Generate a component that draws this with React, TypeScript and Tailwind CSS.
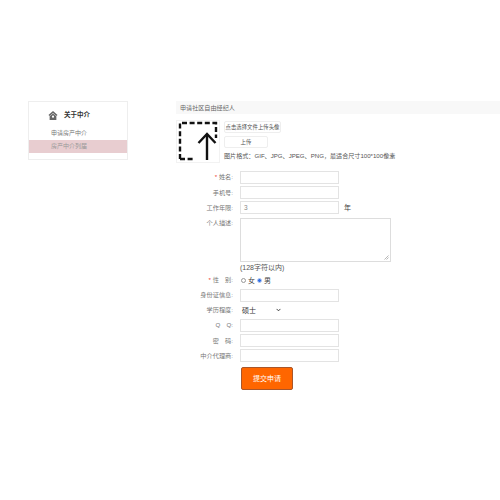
import React from 'react';

const font = { fontFamily: '"Liberation Sans", "Noto Sans CJK SC", sans-serif' };

const Row = ({ label, star, children, className = 'h-[15.2px]' }: { label: string; star?: boolean; children?: React.ReactNode; className?: string }) => (
    <div className={`flex items-center ${className}`}>
        <div className="w-[57px] shrink-0 text-right text-[6.2px] leading-none text-[#777] whitespace-pre">
            {star && <span className="text-[#e33]">* </span>}
            {label}
        </div>
        <div className="ml-[7px] flex items-center">{children}</div>
    </div>
);

const Field = ({ value }: { value?: string }) => (
    <div className="w-[99px] h-[13px] border border-[#e3e3e3] bg-white pl-[3px] text-[6.5px] leading-[11px] text-[#888]">{value}</div>
);

const App: React.FC = () => (
    <div className="w-[500px] h-[500px] bg-white flex items-start overflow-hidden" style={font}>
        {/* 侧边栏 */}
        <div className="ml-[28px] mt-[101px] w-[100px] h-[59px] border border-[#eeeeee] shrink-0">
            <div className="h-[26px] pl-[19px] pt-[1px] flex items-center gap-[6px]">
                <svg width="10" height="11" viewBox="0 0 11 11" className="text-[#666]">
                    <path d="M5.5 0.5 L0.5 5 L1.8 6 L5.5 2.8 L9.2 6 L10.5 5 Z" fill="currentColor" />
                    <path d="M1.8 6.3 L1.8 10.5 L9.2 10.5 L9.2 6.3 L5.5 3.4 Z" fill="currentColor" />
                    <circle cx="5.5" cy="6.8" r="1.2" fill="white" />
                </svg>
                <span className="text-[6.5px] font-bold text-[#333] leading-none">关于中介</span>
            </div>
            <div className="h-[10px] pl-[22px] text-[6px] leading-[10px] text-[#777]">申请房产中介</div>
            <div className="mt-[2px] h-[13px] pl-[22px] bg-[#e8cdd0] text-[6px] leading-[12px] text-[#999]">房产中介列届</div>
        </div>

        {/* 主内容 */}
        <div className="ml-[48px] mt-[101px] w-[324px] shrink-0">
            <div className="h-[13px] bg-[#f8f8f8] pl-[4px] text-[6.1px] leading-[13px] text-[#666]">申请社区自由经纪人</div>

            <div className="mt-[6px] flex">
                <div className="w-[44px] h-[43px] border border-[#f2f2f2] flex items-center justify-center shrink-0">
                    <svg width="40" height="40" viewBox="0 0 40 40" className="-mt-[1px]">
                        <path d="M2 38 V2 H38 V17" fill="none" stroke="#111" strokeWidth="2.4" strokeDasharray="5 2.6" />
                        <path d="M2 38 H17" fill="none" stroke="#111" strokeWidth="2.4" strokeDasharray="5 2.6" />
                        <path d="M29 39 V13" fill="none" stroke="#111" strokeWidth="2.4" />
                        <path d="M20.5 22 L29 13 L37.5 22" fill="none" stroke="#111" strokeWidth="2.4" />
                    </svg>
                </div>
                <div className="ml-[4px] flex flex-col items-start">
                    <div className="mt-[1px] w-[57px] h-[12px] border border-[#eeeeee] rounded-[2px] text-center text-[5.4px] leading-[10px] text-[#555] whitespace-nowrap">点击选择文件上传头像</div>
                    <div className="mt-[3px] w-[44px] h-[12px] border border-[#eeeeee] rounded-[2px] text-center text-[5.4px] leading-[10px] text-[#555]">上传</div>
                    <div className="mt-[3px] text-[6.1px] leading-[9px] text-[#555] whitespace-nowrap">图片格式：GIF、JPG、JPEG、PNG，最适合尺寸100*100像素</div>
                </div>
            </div>

            <div className="mt-[7px]">
                <Row label="姓名:" star><Field /></Row>
                <Row label="手机号:"><Field /></Row>
                <Row label="工作年限:">
                    <Field value="3" />
                    <span className="ml-[5px] text-[7px] leading-none text-[#444]">年</span>
                </Row>
                <div className="flex mt-[2px]">
                    <div className="w-[57px] shrink-0 text-right text-[6.2px] leading-[9px] text-[#777]">个人描述:</div>
                    <div className="ml-[7px]">
                        <div className="relative w-[151px] h-[44px] border border-[#dddddd]">
                            <svg width="5" height="5" viewBox="0 0 5 5" className="absolute right-[1px] bottom-[1px]">
                                <path d="M0.5 4.5 L4.5 0.5 M2.5 4.5 L4.5 2.5" stroke="#999" strokeWidth="0.7" />
                            </svg>
                        </div>
                        <div className="mt-[1px] text-[7px] leading-[9px] text-[#555]">(128字符以内)</div>
                    </div>
                </div>
                <Row label="性　别:" star className="h-[15px] mt-[1px]">
                    <span className="ml-[1px] w-[5px] h-[5px] rounded-full border border-[#999]" />
                    <span className="ml-[2px] text-[7px] leading-none text-[#444]">女</span>
                    <span className="ml-[2px] w-[5px] h-[5px] rounded-full bg-[#2f6fe8] border border-[#bbccee]" />
                    <span className="ml-[2px] text-[7px] leading-none text-[#444]">男</span>
                </Row>
                <Row label="身份证信息:"><Field /></Row>
                <Row label="学历程度:">
                    <div className="w-[44px] h-[11px] bg-white flex items-center justify-between pl-[2px] pr-[3px] text-[7px] leading-none text-[#333]">
                        硕士
                        <svg width="5" height="4" viewBox="0 0 6 4"><path d="M0.7 0.7 L3 3 L5.3 0.7" fill="none" stroke="#222" strokeWidth="1" /></svg>
                    </div>
                </Row>
                <Row label="Q　Q:"><Field /></Row>
                <Row label="密　码:"><Field /></Row>
                <Row label="中介代理商:"><Field /></Row>
            </div>

            <div className="mt-[3px] ml-[65px] w-[52px] h-[23px] bg-[#ff6600] border border-[#a9562a] rounded-[2px] flex items-center justify-center text-[7px] text-white leading-none">提交申请</div>
        </div>
    </div>
);

export default App;
